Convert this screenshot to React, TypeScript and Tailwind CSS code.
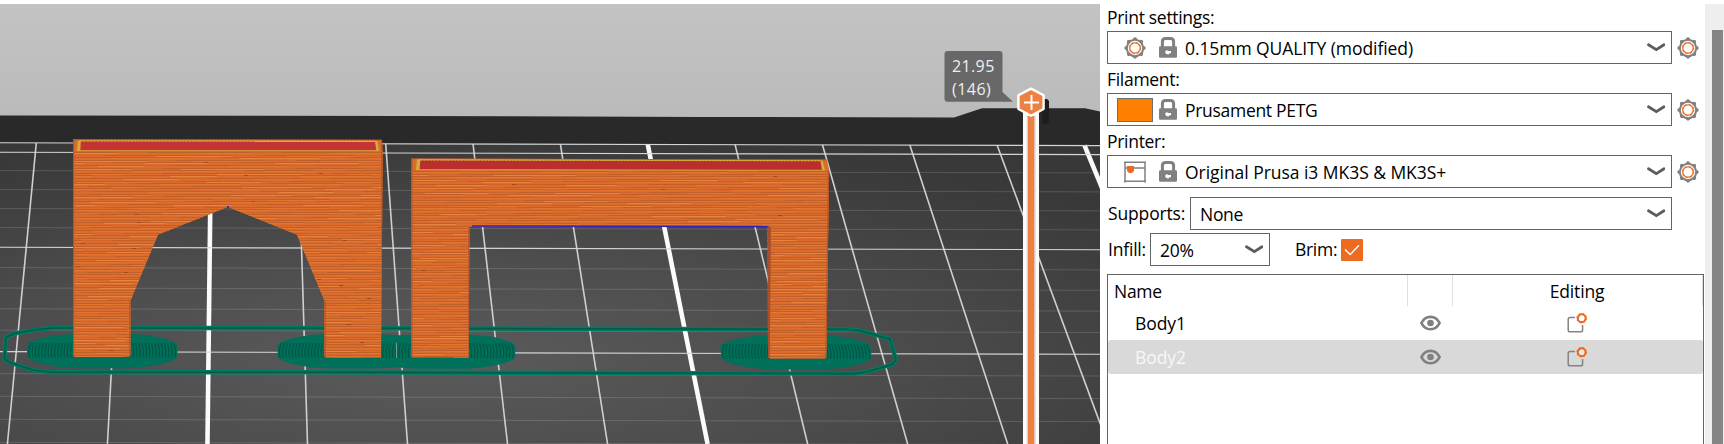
import React from "react";

const seeded = (seed: number) => {
  let s = seed;
  return () => {
    s = (s * 16807) % 2147483647;
    return s / 2147483647;
  };
};

const ARCH =
  "M73 139.3L382 139.7L382.7 152L381 357.6H325.5L324.3 356V300.5L297 234.8L227.7 207L158 234.8L130.5 300.7V355L129.5 356.8H74.5L73 355.5Z";
const BRIDGE =
  "M411.5 158.4L827 159.6L829.2 172L826.3 357.5L825 358.4H770L768 357L767.6 226.7H469.5L468.7 357.6H412L411 356Z";

function Layers({ x, y, w, h, seed }: { x: number; y: number; w: number; h: number; seed: number }) {
  const rnd = seeded(seed);
  const rows: React.ReactNode[] = [];
  for (let i = 0; i * 2.6 < h; i++) {
    const ry = Math.round(y + i * 2.6);
    const shift = (i * 47) % 130;
    rows.push(<rect key={`d${i}`} x={x} y={ry} width={w} height={1} fill="#c15f29" />);
    for (let sx = x - shift; sx < x + w; sx += 130) {
      const len = 45 + rnd() * 40;
      rows.push(<rect key={`l${i}-${sx}`} x={sx} y={ry + 1} width={len} height={1} fill={rnd() > 0.6 ? "#e8823d" : "#e27630"} />);
      rows.push(<rect key={`b${i}-${sx}`} x={sx + len} y={ry} width={30} height={1} fill="#cd672c" />);
    }
    if (rnd() > 0.75) rows.push(<rect key={`s${i}`} x={x + rnd() * w} y={ry} width={4} height={1} fill="#9c4a1f" />);
  }
  return <g shapeRendering="crispEdges">{rows}</g>;
}

function brimPath(cx: number, cy: number, rx: number, ry: number) {
  const p = (dx: number, dy: number) => `${(cx + dx * rx).toFixed(1)} ${(cy + dy * ry).toFixed(1)}`;
  return `M${p(-1, -0.35)}C${p(-0.92, -0.75)} ${p(-0.6, -1)} ${p(-0.25, -1)}H${(cx + 0.25 * rx).toFixed(1)}C${p(0.6, -1)} ${p(0.92, -0.75)} ${p(1, -0.35)}V${(cy + 0.35 * ry).toFixed(1)}C${p(0.92, 0.72)} ${p(0.6, 1)} ${p(0.25, 1)}H${(cx - 0.25 * rx).toFixed(1)}C${p(-0.6, 1)} ${p(-0.92, 0.72)} ${p(-1, 0.35)}Z`;
}

function Brim({ cx, cy, skew = 0 }: { cx: number; cy: number; skew?: number }) {
  const ridges = [];
  for (let k = 0; k < 15; k++) {
    const d = 73.5 - k * 3.2;
    ridges.push(
      <path
        key={k}
        d={`M${cx - d + 2} ${cy - 8}Q${cx - d - 1} ${cy} ${cx - d + 1} ${cy + 6.5}M${cx + d - 2} ${cy - 8}Q${cx + d + 1} ${cy} ${cx + d - 1} ${cy + 6.5}`}
      />,
    );
  }
  return (
    <g transform={skew ? `translate(${-skew * cy} 0) skewX(${(Math.atan(skew) * 180) / Math.PI})` : undefined}>
      <path d={brimPath(cx, cy, 75.2, 17.2)} fill="#00705a" />
      <g fill="none" stroke="#005744" strokeWidth="1.2">
        {ridges}
      </g>
    </g>
  );
}

const SKIRT =
  "M6 337.5L14 333.5L36 329.8L52 328H300L560 328.8L845 329.2L858 330.2L890 339L896 360L892 364.5L866 372L853 373.6L500 372.8L300 372.2H52L34 370.3L11 363L4.5 359Z";

const FINE = [170.6, 189.6, 208.6, 227.6, 267.6, 288, 308.8, 330.2, 373.7, 396.3, 419.3, 442.3];

function Viewport() {
  const verticals = [];
  for (let i = 0; i < 13; i++) {
    const bold = i % 5 === 2;
    verticals.push(
      <line
        key={i}
        x1={36.3 + 87.35 * i}
        y1={143 + i * 0.2}
        x2={7.4 + 100.03 * i}
        y2={444}
        stroke={bold ? "#fbfbfb" : "#cfcfcf"}
        strokeWidth={bold ? 4.6 : 1.6}
      />,
    );
  }
  return (
    <svg className="block h-[440px] w-[1100px]" viewBox="0 4 1100 440" fontFamily="'Open Sans','Noto Sans',sans-serif">
      <defs>
        <linearGradient id="sky" x1="0" y1="0" x2="0" y2="1">
          <stop offset="0" stopColor="#c3c3c3" />
          <stop offset="1" stopColor="#b8b8b8" />
        </linearGradient>
        <radialGradient id="bed" gradientUnits="userSpaceOnUse" cx="0" cy="0" r="1" gradientTransform="translate(430 360) scale(1200 300)">
          <stop offset="0" stopColor="#5b5b5b" />
          <stop offset="0.4" stopColor="#4b4b4b" />
          <stop offset="0.75" stopColor="#393939" />
          <stop offset="1" stopColor="#363636" />
        </radialGradient>
        <clipPath id="archClip"><path d={ARCH} /></clipPath>
        <clipPath id="bridgeClip"><path d={BRIDGE} /></clipPath>
      </defs>
      <rect y="4" width="1100" height="140" fill="url(#sky)" />
      <path d="M0 115.4L400 116L700 116.9L954 117.4L982 108.3H1085L1100 111.5V150H0Z" fill="#292929" />
      <path d="M0 142.8L1100 145.5V444H0Z" fill="url(#bed)" />
      <path d="M1043 99H1047L1049 101V122L1047 124H1042Z" fill="#1e1e1e" />
      <g stroke="#ffffff" strokeOpacity="0.15" strokeWidth="1">
        {FINE.map((y) => (
          <line key={y} x1="0" y1={y} x2="1100" y2={y + 2.3} />
        ))}
      </g>
      {verticals}
      <g stroke="#d4d6d6" strokeWidth="1.1">
        <line x1="0" y1="142.8" x2="1100" y2="145.6" />
        <line x1="0" y1="152.2" x2="1100" y2="154.6" />
        <line x1="0" y1="247.3" x2="1100" y2="249.7" />
        <line x1="0" y1="351.6" x2="1100" y2="354.3" />
      </g>

      <path d={SKIRT} fill="none" stroke="#007a61" strokeWidth="4.4" strokeLinejoin="round" />
      <path d={SKIRT} fill="none" stroke="#005b48" strokeWidth="1.6" strokeLinejoin="round" />
      <Brim cx={102.2} cy={351} />
      <Brim cx={352.7} cy={351.3} />
      <Brim cx={440} cy={351.5} />
      <path d="M396.5 343V358" stroke="#7b9a91" strokeWidth="1" />
      <Brim cx={796} cy={352.3} skew={0.08} />

      <path d={ARCH} fill="#dc6c2e" />
      <g clipPath="url(#archClip)">
        <Layers x={73} y={152} w={310} h={206} seed={417} />
        <path d="M73.5 139V358M382 139V358M325 300V357.5M130 300V357" fill="none" stroke="#b4562a" strokeWidth="1.4" />
        <path d="M74 139.8H382" stroke="#b5562a" strokeWidth="1" />
        <path d="M78 140.4L377.5 140.9L379 151H77Z" fill="#cfb03a" />
        <path d="M80.8 141.2L375 141.5L376.3 150.2H80.3Z" fill="#c53434" />
        <path d="M80 141H375" stroke="#d8b13a" strokeWidth="1" strokeDasharray="2 1.4" />
      </g>
      <rect x="227" y="206" width="2" height="2" fill="#3a22c8" />

      <path d={BRIDGE} fill="#dc6c2e" />
      <g clipPath="url(#bridgeClip)">
        <Layers x={411} y={171} w={419} h={188} seed={9241} />
        <path d="M411.8 158V358M469 226V358M828.6 170L826 358" fill="none" stroke="#b4562a" strokeWidth="1.4" />
        <path d="M767.5 227H771L769.8 358H767.5Z" fill="#a9502a" />
        <path d="M411 158.8L828 160" stroke="#b5562a" strokeWidth="1" />
        <path d="M417 159.3L822.5 160.4L825 170.6L416 170Z" fill="#cfb03a" />
        <path d="M420.3 160.2L820.5 161L822 169.8L419.6 169.2Z" fill="#ba2e30" />
        <path d="M420 160L820 160.9" stroke="#d8b13a" strokeWidth="1" strokeDasharray="2 1.4" />
      </g>
      <path d="M472 225.9L768.5 226.6" stroke="#2c22c4" strokeWidth="1.5" />

      <path d="M947.5 51H999.5Q1002.5 51 1002.5 54V92L1013 101.8H947.5Q944.5 101.8 944.5 98.8V54Q944.5 51 947.5 51Z" fill="#686868" />
      <text x="952" y="71.8" fontSize="16" fill="#efefef" textLength="42">21.95</text>
      <text x="952" y="94.6" fontSize="16" fill="#efefef" textLength="38.5">(146)</text>
      <path d="M1023 112H1039V444H1023Z" fill="#fbfdfd" />
      <path d="M1027.8 116H1034.5V444H1027.8Z" fill="#ed8141" />
      <path d="M1027.3 116V444M1035 116V444" stroke="#d6c9c0" strokeWidth="1" />
      <path d="M1031 88.6L1043.6 95.3V109L1031 115.8L1018.4 109V95.3Z" fill="#ed8141" stroke="#ffffff" strokeWidth="2.4" strokeLinejoin="round" />
      <path d="M1024 102.5H1039M1031.5 95V110" stroke="#ffffff" strokeWidth="2" />
    </svg>
  );
}

function GearIcon() {
  const bumps = Array.from({ length: 8 }, (_, i) => {
    const a = (i * Math.PI) / 4;
    return <circle key={i} cx={11 + 8.6 * Math.cos(a)} cy={11 + 8.6 * Math.sin(a)} r="2.1" />;
  });
  return (
    <svg className="size-[22px] shrink-0" viewBox="0 0 22 22">
      <g fill="#808080">{bumps}</g>
      <circle cx="11" cy="11" r="8.2" fill="#fff" stroke="#808080" strokeWidth="2" />
      <circle cx="11" cy="11" r="5.2" fill="none" stroke="#ed6b21" strokeWidth="1.3" />
      <circle cx="11" cy="11" r="5.7" fill="none" stroke="#ed6b21" strokeWidth="1" strokeDasharray="2.24 2.24" />
    </svg>
  );
}

function LockIcon() {
  return (
    <svg className="h-[21px] w-[18px] shrink-0" viewBox="0 0 18 21">
      <path d="M3.4 12V4.6Q3.4 1.5 6.5 1.5H11.5Q14.6 1.5 14.6 4.6V12" fill="none" stroke="#808080" strokeWidth="3" />
      <rect x="0" y="9.300" width="18" height="11.500" rx="1.2" fill="#808080" />
      <path d="M6.2 14.800Q6.2 13.2 8 13.2L9.5 14H12V16.2H10.5L9.5 17.4Q6.2 17.4 6.2 14.8Z" fill="#fff" />
    </svg>
  );
}

function PrinterIcon() {
  return (
    <svg className="size-[22px] shrink-0" viewBox="0 0 22 22">
      <path d="M1 .5V21.5M21 .5V21.5M0 1.2H22M1 7H21M0 20.3H22" fill="none" stroke="#808080" strokeWidth="1.5" />
      <path d="M3 5H10V10L8 12H5L3 10Z" fill="#ed6b21" />
    </svg>
  );
}

function Chevron() {
  return (
    <svg className="h-[9px] w-[18px] shrink-0" viewBox="0 0 18 9">
      <path d="M1.500 1.800L9.300 6.600L17 1.800" fill="none" stroke="#5c5c5c" strokeWidth="2.800" strokeLinecap="round" />
    </svg>
  );
}

function EyeIcon() {
  return (
    <svg className="h-4 w-[21px]" viewBox="0 0 21 16">
      <path d="M1.4 8C5.500-.300 15.500-.300 19.600 8C15.500 16.300 5.500 16.300 1.400 8Z" fill="none" stroke="#808080" strokeWidth="2.700" />
      <circle cx="10.5" cy="8" r="3.3" fill="#808080" />
    </svg>
  );
}

function EditIcon() {
  return (
    <svg className="size-5" viewBox="0 0 20 20">
      <path d="M8 4.500H3Q1.200 4.500 1.200 6.300V17Q1.200 18.800 3 18.800H13.800Q15.600 18.800 15.600 17V12" fill="none" stroke="#848484" strokeWidth="1.5" />
      <circle cx="14.700" cy="5.200" r="3.900" fill="#fff" fillOpacity="0.4" stroke="#ed6b21" strokeWidth="2.100" />
      <circle cx="14.700" cy="5.200" r="4.900" fill="none" stroke="#ed6b21" strokeWidth="0.900" strokeDasharray="1.920 1.920" />
    </svg>
  );
}

function Preset({ label, labelClass, icon, value, valueClass }: { label: string; labelClass: string; icon: React.ReactNode; value: string; valueClass: string }) {
  return (
    <div className="flex flex-col">
      <div className={`flex items-center ${labelClass}`}>{label}</div>
      <div className="flex items-center">
        <div className="flex h-[33px] w-[565px] items-center border border-[#646464] pr-[6px] pl-[9px]">
          <div className="flex w-9 justify-center">{icon}</div>
          <div className="ml-[6px] flex">
            <LockIcon />
          </div>
          <span className={`ml-2 grow ${valueClass}`}>{value}</span>
          <Chevron />
        </div>
        <div className="ml-[5px] flex">
          <GearIcon />
        </div>
      </div>
    </div>
  );
}

function BodyRow({ name, selected }: { name: string; selected?: boolean }) {
  return (
    <div className={`flex h-[34px] items-center ${selected ? "rounded-[3px] bg-[#d9d9d9] text-[#f7f7f7]" : ""}`}>
      <span className="w-[300px] pl-[27px] tracking-[-0.1px]">{name}</span>
      <div className="flex w-[45px] justify-center pr-px">
        <EyeIcon />
      </div>
      <div className="flex grow justify-center pr-[3px]">
        <EditIcon />
      </div>
    </div>
  );
}

export default function App() {
  return (
    <div className="flex h-[444px] w-[1724px] overflow-hidden bg-white pt-1 font-['Open_Sans','Noto_Sans',sans-serif] text-[17.5px] leading-6 tracking-[-0.3px] text-black">
      <div className="shrink-0">
        <Viewport />
      </div>
      <div className="flex w-[605px] shrink-0 flex-col pl-[7px]">
        <Preset label="Print settings:" labelClass="h-[27px] pb-[2px]" icon={<GearIcon />} value="0.15mm QUALITY (modified)" valueClass="tracking-[-0.08px]" />
        <Preset label="Filament:" labelClass="h-[29px]" icon={<span className="h-6 w-9 border border-[#6f6f6f] bg-[#ff8000]" />} value="Prusament PETG" valueClass="tracking-[-0.3px]" />
        <Preset label="Printer:" labelClass="h-[29px]" icon={<PrinterIcon />} value="Original Prusa i3 MK3S & MK3S+" valueClass="tracking-[-0.04px]" />
        <div className="mt-[9px] flex h-[33px] items-center">
          <span className="w-[83px] pb-[2px] pl-px tracking-[-0.15px]">Supports:</span>
          <div className="flex h-[33px] w-[482px] items-center border border-[#646464] pr-[6px] pl-[9px]">
            <span className="grow">None</span>
            <Chevron />
          </div>
        </div>
        <div className="mt-[3px] flex h-[33px] items-center">
          <span className="w-[43px] pb-[2px] pl-px tracking-[-0.2px]">Infill:</span>
          <div className="flex h-[33px] w-[120px] items-center border border-[#646464] pr-[6px] pl-[9px]">
            <span className="grow">20%</span>
            <Chevron />
          </div>
          <span className="ml-[25px] w-[46px] pb-[2px]">Brim:</span>
          <span className="flex size-[22px] items-center justify-center rounded-[1px] bg-[#ed6b21]">
            <svg className="size-4" viewBox="0 0 16 16">
              <path d="M1 7.500L6.200 12.500L15 3.200" fill="none" stroke="#fff" strokeWidth="1.400" />
            </svg>
          </span>
        </div>
        <div className="mt-2 flex w-[597px] grow flex-col border border-b-0 border-[#646464]">
          <div className="flex h-[31px] items-stretch">
            <span className="w-[300px] border-r border-[#e0e0e0] pt-1 pl-[6px]">Name</span>
            <span className="w-[45px] border-r border-[#e0e0e0]" />
            <span className="grow border-r border-[#e0e0e0] pt-1 pr-px text-center tracking-[-0.15px]">Editing</span>
          </div>
          <BodyRow name="Body1" />
          <BodyRow name="Body2" selected />
        </div>
      </div>
      <div className="flex w-[19px] shrink-0 flex-col bg-[#eeeeee] pt-[26px] pl-[7px]">
        <div className="w-[11px] grow bg-[#858585]" />
      </div>
    </div>
  );
}
